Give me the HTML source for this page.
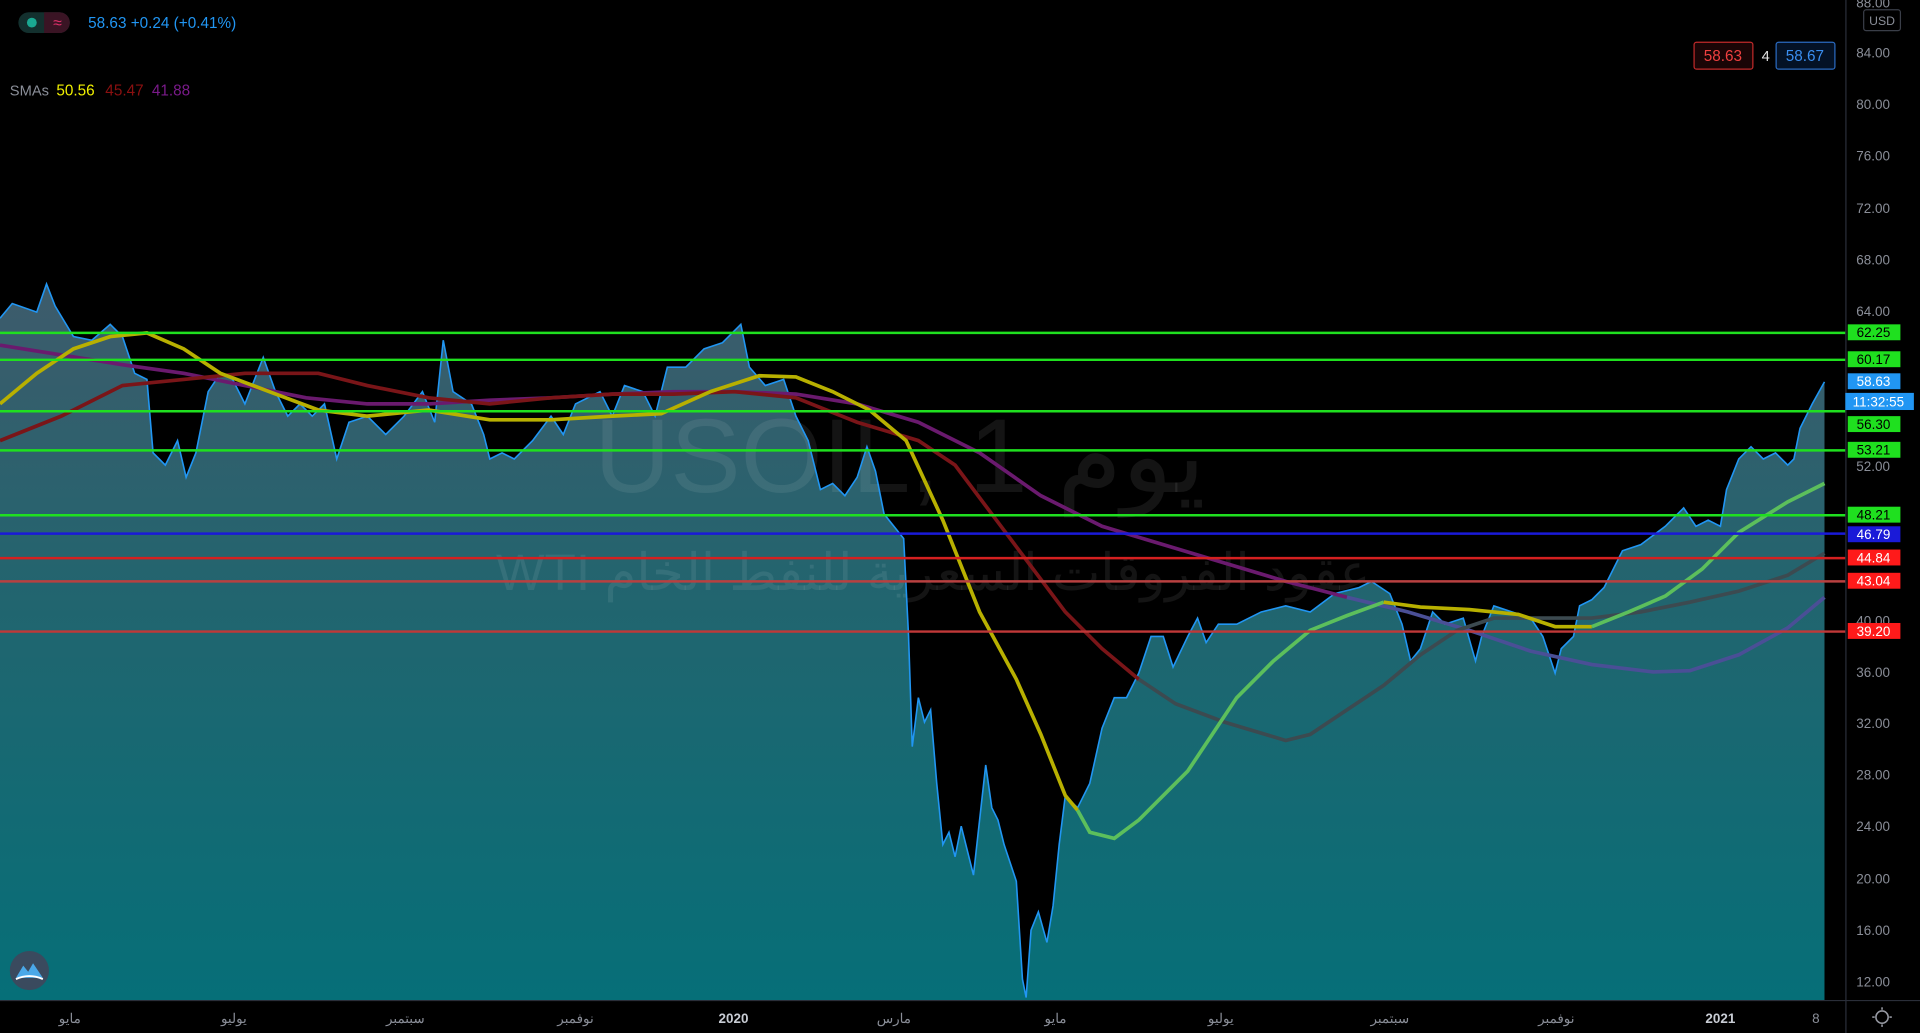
<!DOCTYPE html>
<html><head><meta charset="utf-8"><style>
html,body{margin:0;padding:0;background:#000;overflow:hidden}
svg{display:block}
text{font-family:"Liberation Sans","Noto Sans CJK SC",sans-serif}
</style></head><body>
<svg width="1920" height="1033" viewBox="0 0 1568 844" preserveAspectRatio="none" xmlns="http://www.w3.org/2000/svg">
<defs>
<linearGradient id="g" gradientUnits="userSpaceOnUse" x1="0" y1="230" x2="0" y2="817">
<stop offset="0" stop-color="#3e5b6b"/><stop offset="0.45" stop-color="#21656f"/><stop offset="1" stop-color="#066f78"/>
</linearGradient>
</defs>
<rect width="1568" height="844" fill="#000"/>
<polygon fill="url(#g)" points="0,817 0,260 10,248 30,255 38,232 45,250 60,275 75,278 90,265 100,275 110,305 120,310 125,370 135,380 145,360 152,390 160,370 170,320 180,305 190,310 200,330 215,292 225,320 235,340 245,330 255,340 265,330 275,375 285,345 300,340 315,355 330,340 345,320 355,345 362,278 370,320 385,330 395,355 400,375 410,370 420,375 435,360 450,340 460,355 470,330 490,320 500,340 510,315 525,320 535,340 545,300 560,300 575,285 590,280 600,270 605,265 612,300 625,315 640,310 650,340 660,360 670,400 680,395 690,405 700,390 708,365 715,385 722,420 730,430 738,440 742,520 745,610 750,570 755,590 760,580 765,640 770,690 775,680 780,700 785,675 795,715 805,625 810,660 815,670 820,690 830,720 835,800 838,815 842,760 848,745 855,770 860,740 865,690 870,650 880,660 890,640 900,595 910,570 920,570 930,550 940,520 950,520 958,545 970,520 978,505 985,525 995,510 1010,510 1030,500 1050,495 1070,500 1090,485 1110,480 1120,475 1135,485 1145,510 1152,540 1160,530 1170,500 1180,510 1195,505 1205,540 1210,520 1220,495 1235,500 1250,505 1260,520 1270,550 1275,530 1285,520 1290,495 1300,490 1310,480 1320,460 1325,450 1340,445 1360,430 1375,415 1385,430 1395,425 1405,430 1410,400 1420,375 1430,365 1440,375 1450,370 1460,380 1465,375 1470,350 1480,330 1490,312 1490,817"/>
<g fill="#ffffff" fill-opacity="0.08">
<text x="735" y="402" text-anchor="middle" font-size="86">USOIL, 1 يوم</text>
<text x="762" y="482" text-anchor="middle" font-size="42">WTI عقود الفروقات السعرية للنفط الخام</text>
</g>
<polyline fill="none" stroke="#2196f3" stroke-width="1.3" points="0,260 10,248 30,255 38,232 45,250 60,275 75,278 90,265 100,275 110,305 120,310 125,370 135,380 145,360 152,390 160,370 170,320 180,305 190,310 200,330 215,292 225,320 235,340 245,330 255,340 265,330 275,375 285,345 300,340 315,355 330,340 345,320 355,345 362,278 370,320 385,330 395,355 400,375 410,370 420,375 435,360 450,340 460,355 470,330 490,320 500,340 510,315 525,320 535,340 545,300 560,300 575,285 590,280 600,270 605,265 612,300 625,315 640,310 650,340 660,360 670,400 680,395 690,405 700,390 708,365 715,385 722,420 730,430 738,440 742,520 745,610 750,570 755,590 760,580 765,640 770,690 775,680 780,700 785,675 795,715 805,625 810,660 815,670 820,690 830,720 835,800 838,815 842,760 848,745 855,770 860,740 865,690 870,650 880,660 890,640 900,595 910,570 920,570 930,550 940,520 950,520 958,545 970,520 978,505 985,525 995,510 1010,510 1030,500 1050,495 1070,500 1090,485 1110,480 1120,475 1135,485 1145,510 1152,540 1160,530 1170,500 1180,510 1195,505 1205,540 1210,520 1220,495 1235,500 1250,505 1260,520 1270,550 1275,530 1285,520 1290,495 1300,490 1310,480 1320,460 1325,450 1340,445 1360,430 1375,415 1385,430 1395,425 1405,430 1410,400 1420,375 1430,365 1440,375 1450,370 1460,380 1465,375 1470,350 1480,330 1490,312"/>
<polyline fill="none" stroke="#6a1a6e" stroke-width="3" points="0,282 50,290 100,298 150,305 200,315 250,325 300,330 350,330 400,327 450,325 500,322 550,320 600,320 650,322 700,330 750,345 800,370 850,405 900,430 950,445 1000,460 1050,475 1100,488"/>
<polyline fill="none" stroke="#4a4f96" stroke-width="3" points="1100,488 1150,500 1200,515 1250,532 1300,543 1350,549 1380,548 1420,535 1460,513 1490,488"/>
<polyline fill="none" stroke="#7a1518" stroke-width="3" points="0,360 50,340 100,315 150,310 200,305 260,305 300,315 350,325 400,330 450,325 500,322 550,322 600,320 650,325 700,345 750,360 780,380 810,420 840,460 870,500 900,530 930,555"/>
<polyline fill="none" stroke="#3c4a50" stroke-width="3" points="930,555 960,575 1000,590 1050,605 1070,600 1100,580 1130,560 1160,535 1190,515 1220,505 1260,505 1300,505 1340,500 1380,492 1420,483 1460,470 1490,452"/>
<polyline fill="none" stroke="#b8b000" stroke-width="3" points="0,330 30,305 60,285 90,275 120,272 150,285 180,305 220,320 260,335 300,340 350,335 400,343 450,343 500,340 540,338 580,320 620,307 650,308 680,320 710,335 740,360 770,425 800,500 830,555 850,600 870,650 880,662"/>
<polyline fill="none" stroke="#5cbf5c" stroke-width="3" points="880,662 890,680 910,685 930,670 950,650 970,630 990,600 1010,570 1040,540 1070,515 1100,503 1130,492"/>
<polyline fill="none" stroke="#b8b000" stroke-width="3" points="1130,492 1160,496 1200,498 1240,502 1270,512 1300,512"/>
<polyline fill="none" stroke="#5cbf5c" stroke-width="3" points="1300,512 1330,500 1360,487 1390,465 1420,435 1460,410 1490,395"/>
<g stroke-width="2">
<line x1="0" x2="1507" y1="272" y2="272" stroke="#1fe01f"/>
<line x1="0" x2="1507" y1="294" y2="294" stroke="#1fe01f"/>
<line x1="0" x2="1507" y1="336" y2="336" stroke="#1fe01f"/>
<line x1="0" x2="1507" y1="368" y2="368" stroke="#1fe01f"/>
<line x1="0" x2="1507" y1="421" y2="421" stroke="#1fe01f"/>
<line x1="0" x2="1507" y1="436" y2="436" stroke="#1a1ad8"/>
<line x1="0" x2="1507" y1="456" y2="456" stroke="#d42020"/>
<line x1="0" x2="1507" y1="475" y2="475" stroke="#b84040"/>
<line x1="0" x2="1507" y1="516" y2="516" stroke="#c03838"/>
</g>
<line x1="1507.5" x2="1507.5" y1="0" y2="844" stroke="#2a2e39"/>
<line x1="0" x2="1568" y1="817.5" y2="817.5" stroke="#2a2e39"/>
<g font-size="11" fill="#8a8e98">
<text x="1516" y="6">88.00</text><text x="1516" y="47">84.00</text><text x="1516" y="89">80.00</text><text x="1516" y="131">76.00</text><text x="1516" y="174">72.00</text><text x="1516" y="216">68.00</text><text x="1516" y="258">64.00</text><text x="1516" y="385">52.00</text><text x="1516" y="511">40.00</text><text x="1516" y="553">36.00</text><text x="1516" y="595">32.00</text><text x="1516" y="637">28.00</text><text x="1516" y="679">24.00</text><text x="1516" y="722">20.00</text><text x="1516" y="764">16.00</text><text x="1516" y="806">12.00</text>
</g>
<rect x="1522" y="8" width="30" height="17" rx="2" fill="none" stroke="#3a3e48"/>
<text x="1537" y="20.5" font-size="10" fill="#8a8e98" text-anchor="middle">USD</text>
<g font-size="11" text-anchor="middle">
<rect x="1509" y="265" width="43" height="13" fill="#1fe01f"/><text x="1530" y="275.5" fill="#000">62.25</text>
<rect x="1509" y="287" width="43" height="13" fill="#1fe01f"/><text x="1530" y="297.5" fill="#000">60.17</text>
<rect x="1509" y="305" width="43" height="13" fill="#2196f3"/><text x="1530" y="315.5" fill="#fff">58.63</text>
<rect x="1507" y="321" width="56" height="14" fill="#2196f3"/><text x="1534" y="332" fill="#fff">11:32:55</text>
<rect x="1509" y="340" width="43" height="13" fill="#1fe01f"/><text x="1530" y="350.5" fill="#000">56.30</text>
<rect x="1509" y="361" width="43" height="13" fill="#1fe01f"/><text x="1530" y="371.5" fill="#000">53.21</text>
<rect x="1509" y="414" width="43" height="13" fill="#1fe01f"/><text x="1530" y="424.5" fill="#000">48.21</text>
<rect x="1509" y="430" width="43" height="13" fill="#1a1ad8"/><text x="1530" y="440.5" fill="#fff">46.79</text>
<rect x="1509" y="449" width="43" height="13" fill="#ff1a1a"/><text x="1530" y="459.5" fill="#fff">44.84</text>
<rect x="1509" y="468" width="43" height="13" fill="#ff1a1a"/><text x="1530" y="478.5" fill="#fff">43.04</text>
<rect x="1509" y="509" width="43" height="13" fill="#ff1a1a"/><text x="1530" y="519.5" fill="#fff">39.20</text>
</g>
<g font-size="11" fill="#8a8e98" text-anchor="middle">
<text x="57" y="836">مايو</text><text x="191" y="836">يوليو</text><text x="331" y="836">سبتمبر</text><text x="470" y="836">نوفمبر</text><text x="599" y="836" fill="#c8ccd4" font-weight="bold">2020</text><text x="730" y="836">مارس</text><text x="862" y="836">مايو</text><text x="997" y="836">يوليو</text><text x="1135" y="836">سبتمبر</text><text x="1271" y="836">نوفمبر</text><text x="1405" y="836" fill="#c8ccd4" font-weight="bold">2021</text><text x="1483" y="836">8</text>
</g>
<circle cx="1537" cy="831" r="5" fill="none" stroke="#9598a1" stroke-width="1.3"/>
<g stroke="#9598a1" stroke-width="1.3"><line x1="1537" y1="823" x2="1537" y2="825"/><line x1="1537" y1="837" x2="1537" y2="839"/><line x1="1529" y1="831" x2="1531" y2="831"/><line x1="1543" y1="831" x2="1545" y2="831"/></g>
<rect x="15" y="10" width="42" height="17" rx="8.5" fill="#13302e"/>
<path d="M36 10 H48.5 A8.5 8.5 0 0 1 48.5 27 H36 Z" fill="#3a1424"/>
<circle cx="26" cy="18.5" r="4" fill="#1aa891"/>
<text x="47" y="23" font-size="13" fill="#e0306a" text-anchor="middle">≈</text>
<text x="72" y="23" font-size="12.5" fill="#2196f3">58.63 +0.24 (+0.41%)</text>
<text x="8" y="78" font-size="12" fill="#8a8e98">SMAs</text>
<text x="46" y="78" font-size="12.5" fill="#f0f000">50.56</text>
<text x="86" y="78" font-size="12.5" fill="#8b1010">45.47</text>
<text x="124" y="78" font-size="12.5" fill="#7a1a8a">41.88</text>
<rect x="1383.5" y="34.5" width="48" height="22" rx="2" fill="#1a0506" stroke="#c02a2a"/>
<text x="1407" y="50" font-size="12.5" fill="#f04040" text-anchor="middle">58.63</text>
<text x="1442" y="50" font-size="12" fill="#e0e0e0" text-anchor="middle">4</text>
<rect x="1450.5" y="34.5" width="48" height="22" rx="2" fill="#041226" stroke="#2a6ac0"/>
<text x="1474" y="50" font-size="12.5" fill="#3a8ef0" text-anchor="middle">58.67</text>
<circle cx="24" cy="793" r="16" fill="#3a4a5e"/>
<path d="M13 799 L19 789 L23 794 L27 787 L35 799 Z" fill="#4aa8e8"/>
<path d="M13 800 Q24 795 35 800" stroke="#fff" stroke-width="1.5" fill="none"/>
</svg>
</body></html>
